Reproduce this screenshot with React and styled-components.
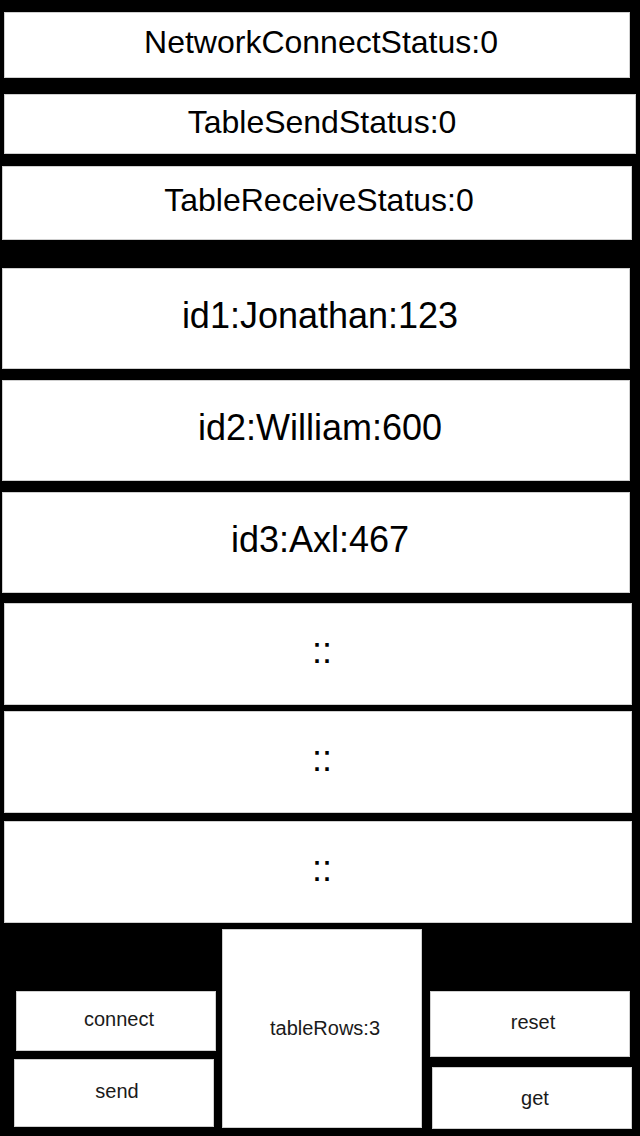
import React from "react";
import styled, { createGlobalStyle } from "styled-components";

const Global = createGlobalStyle`
  html, body {
    margin: 0;
    padding: 0;
    background: #000;
  }
  body {
    font-family: "Liberation Sans", Arial, Helvetica, sans-serif;
  }
  * { box-sizing: border-box; }
`;

const Screen = styled.div`
  width: 640px;
  height: 1136px;
  background: #000;
  display: flex;
  flex-direction: column;
  padding-top: 12px;
  overflow: hidden;
`;

const Panel = styled.div`
  height: ${(p) => p.$h}px;
  margin-top: ${(p) => p.$mt || 0}px;
  margin-left: ${(p) => p.$ml}px;
  width: ${(p) => p.$w}px;
  background: #fff;
  border: 1px solid #cfcfcf;
  display: flex;
  align-items: center;
  justify-content: center;
  font-size: ${(p) => p.$size}px;
  color: #000;
  line-height: 1;
  padding-bottom: ${(p) => p.$pb || 0}px;
  padding-left: ${(p) => p.$pl || 0}px;
  white-space: nowrap;
`;

const Controls = styled.div`
  display: flex;
  margin-top: 6px;
  height: 200px;
`;

const SideColumn = styled.div`
  display: flex;
  flex-direction: column;
  padding-top: 62px;
  margin-left: ${(p) => p.$ml || 0}px;
`;

const Button = styled.div`
  width: 200px;
  height: ${(p) => p.$h}px;
  margin-top: ${(p) => p.$mt || 0}px;
  margin-left: ${(p) => p.$ml || 0}px;
  background: #fff;
  border: 1px solid #cfcfcf;
  display: flex;
  align-items: center;
  justify-content: center;
  font-size: 20px;
  color: #1a1a1a;
  padding-bottom: ${(p) => p.$pb || 0}px;
  padding-left: 6px;
`;

const Counter = styled.div`
  width: 200px;
  height: 199px;
  margin-left: 6px;
  background: #fff;
  border: 1px solid #cfcfcf;
  display: flex;
  align-items: center;
  justify-content: center;
  font-size: 20px;
  color: #1a1a1a;
  padding-left: 6px;
`;

const statuses = [
  { text: "NetworkConnectStatus:0", h: 66, mt: 0, ml: 4, w: 626, pb: 7, pl: 8 },
  { text: "TableSendStatus:0", h: 60, mt: 16, ml: 4, w: 632, pb: 4, pl: 4 },
  { text: "TableReceiveStatus:0", h: 74, mt: 12, ml: 2, w: 630, pb: 6, pl: 4 },
];

const rows = [
  { text: "id1:Jonathan:123", h: 101, mt: 28, ml: 2, w: 628 },
  { text: "id2:William:600", h: 101, mt: 11, ml: 2, w: 628 },
  { text: "id3:Axl:467", h: 101, mt: 11, ml: 2, w: 628 },
  { text: "::", h: 102, mt: 10, ml: 4, w: 628 },
  { text: "::", h: 102, mt: 6, ml: 4, w: 628 },
  { text: "::", h: 102, mt: 8, ml: 4, w: 628 },
];

export default function App() {
  return (
    <>
      <Global />
      <Screen>
        {statuses.map((s) => (
          <Panel key={s.text} $h={s.h} $mt={s.mt} $ml={s.ml} $w={s.w} $size={32} $pb={s.pb} $pl={s.pl}>
            {s.text}
          </Panel>
        ))}
        {rows.map((r, i) => (
          <Panel key={i} $h={r.h} $mt={r.mt} $ml={r.ml} $w={r.w} $size={36} $pb={6} $pl={8}>
            {r.text}
          </Panel>
        ))}
        <Controls>
          <SideColumn>
            <Button $h={60} $ml={16} $pb={4}>connect</Button>
            <Button $h={68} $mt={8} $ml={14} $pb={4}>send</Button>
          </SideColumn>
          <Counter>tableRows:3</Counter>
          <SideColumn $ml={8}>
            <Button $h={66} $pb={4}>reset</Button>
            <Button $h={62} $mt={10} $ml={2}>get</Button>
          </SideColumn>
        </Controls>
      </Screen>
    </>
  );
}
